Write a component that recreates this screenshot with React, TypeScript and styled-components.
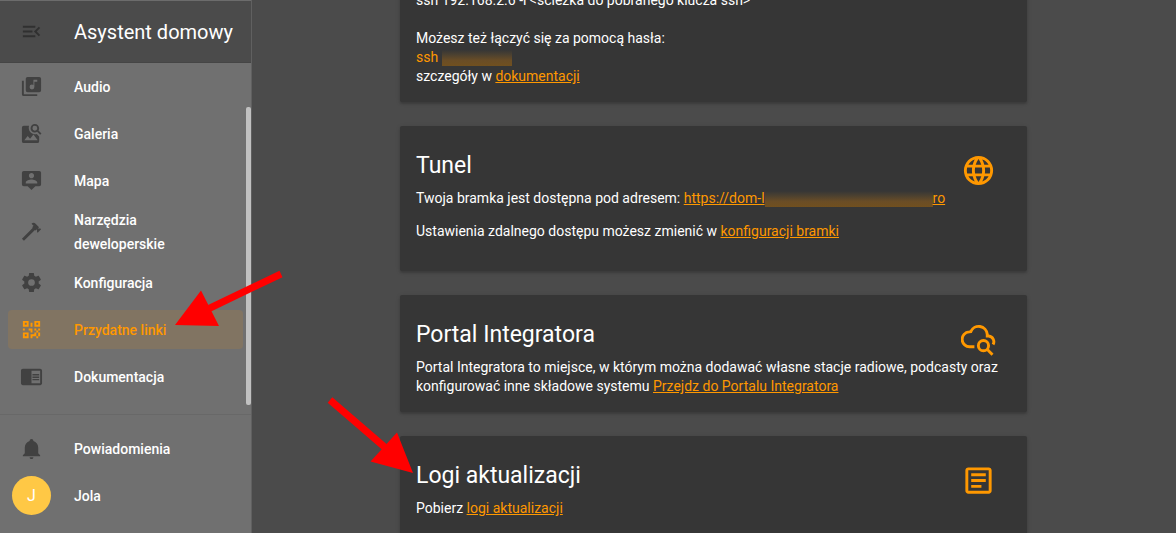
import React from "react";
import styled, { createGlobalStyle } from "styled-components";

const accent = "#ff9800";

const GlobalStyle = createGlobalStyle`
  * { box-sizing: border-box; }
  body {
    margin: 0;
    background: #4b4b4b;
    color: #fff;
    font-family: Roboto, "Noto Sans", sans-serif;
    font-size: 14px;
    line-height: 19px;
  }
`;

const Shell = styled.div`
  position: relative;
  display: flex;
  height: 100vh;
  overflow: hidden;
`;

const Sidebar = styled.aside`
  position: relative;
  display: flex;
  flex-direction: column;
  flex: none;
  width: 252px;
  background: #707070;
  border-right: 1px solid #606060;
`;

const SidebarHeader = styled.header`
  display: flex;
  align-items: center;
  gap: 31px;
  height: 63px;
  padding: 0 0 0 20px;
  background: #4b4b4b;
  border-top: 1px solid #6c6c6c;
  border-bottom: 1px solid #454545;
`;

const MenuButton = styled.button`
  display: flex;
  padding: 0;
  border: 0;
  background: none;
  color: #303030;
`;

const AppTitle = styled.div`
  font-size: 20px;
  line-height: 24px;
  white-space: nowrap;
`;

const Nav = styled.nav`
  display: flex;
  flex-direction: column;
  gap: 8px;
  padding: 4px 8px 0;
`;

const FooterNav = styled(Nav)`
  margin-top: auto;
  padding: 14px 8px 18px;
  border-top: 1px solid #686868;
`;

const NavItem = styled.a<{ $active?: boolean; $tall?: boolean }>`
  display: flex;
  align-items: center;
  gap: 31px;
  height: ${(p) => (p.$tall ? 47 : 39)}px;
  padding: 0 24px 0 12px;
  border-radius: 4px;
  background: ${(p) => (p.$active ? "rgba(255, 152, 0, 0.12)" : "transparent")};
  color: ${(p) => (p.$active ? accent : "#fff")};
  font-weight: 500;
  line-height: 24px;
  text-decoration: none;

  svg { color: ${(p) => (p.$active ? accent : "#414141")}; }
`;

const Avatar = styled.span`
  flex: none;
  width: 39px;
  margin: 0 -8px;
  border-radius: 50%;
  background: #ffc845;
  font-size: 16px;
  font-weight: 400;
  line-height: 39px;
  text-align: center;
`;

const Scrollbar = styled.div`
  position: absolute;
  top: 107px;
  right: 0;
  width: 5px;
  height: 298px;
  border-radius: 2px;
  background: #c1c1c1;
`;

const Main = styled.main`
  flex: 1;
  min-width: 0;
  padding: 0 25px 0 24px;
  overflow: hidden;
`;

const Cards = styled.div`
  display: flex;
  flex-direction: column;
  gap: 24px;
  max-width: 627px;
  margin: -25px auto 0;
`;

const Card = styled.section`
  padding: 16px;
  border-radius: 2px;
  background: #363636;
  box-shadow: 0 2px 2px rgba(0, 0, 0, 0.14), 0 1px 5px rgba(0, 0, 0, 0.12);
`;

const CardHeader = styled.div`
  display: flex;
  justify-content: space-between;
  align-items: flex-start;
  height: 47px;
  padding: 11px 15px 0 0;
`;

const CardTitle = styled.h1`
  margin: 0;
  font-size: 23px;
  font-weight: 400;
  line-height: 26px;
`;

const Text = styled.div``;

const Paragraph = styled.p`
  margin: 0 0 14px;
`;

const Link = styled.a`
  color: ${accent};
`;

const Command = styled.span`
  color: ${accent};
`;

const Redacted = styled.span<{ $width: number }>`
  display: inline-block;
  width: ${(p) => p.$width}px;
  height: 16px;
  vertical-align: -4px;
  background: linear-gradient(#363636, #4c4130 30%, #6a4d26 65%, #71501f);
`;

const Annotations = styled.svg`
  position: absolute;
  top: 0;
  left: 0;
  pointer-events: none;
`;

const icons = {
  menu: "M21,15.61L19.59,17L14.58,12L19.59,7L21,8.39L17.44,12L21,15.61M3,6H16V8H3V6M3,13V11H13V13H3M3,18V16H16V18H3Z",
  audio: "M20,2H8A2,2 0 0,0 6,4V16A2,2 0 0,0 8,18H20A2,2 0 0,0 22,16V4A2,2 0 0,0 20,2M18,7H15V12.5A2.5,2.5 0 0,1 12.5,15A2.5,2.5 0 0,1 10,12.5A2.5,2.5 0 0,1 12.5,10C13.07,10 13.58,10.19 14,10.5V5H18M4,6H2V20A2,2 0 0,0 4,22H18V20H4V6Z",
  gallery: "M15.5,2C13,2 11,4 11,6.5C11,9 13,11 15.5,11C16.4,11 17.2,10.7 17.9,10.3L21,13.4L22.4,12L19.3,8.9C19.7,8.2 20,7.4 20,6.5C20,4 18,2 15.5,2M15.5,4A2.5,2.5 0 0,1 18,6.5A2.5,2.5 0 0,1 15.5,9A2.5,2.5 0 0,1 13,6.5A2.5,2.5 0 0,1 15.5,4ZM9.4,4H4A2,2 0 0,0 2,6V20A2,2 0 0,0 4,22H18A2,2 0 0,0 20,20V15L17.5,12.6C12.5,14 8,9.5 9.4,4ZM4.5,19L8,14.5L10.5,17.5L14,13L18.5,19Z",
  map: "M20,2H4A2,2 0 0,0 2,4V16A2,2 0 0,0 4,18H8L12,22L16,18H20A2,2 0 0,0 22,16V4A2,2 0 0,0 20,2M12,4.3C13.5,4.3 14.7,5.5 14.7,7C14.7,8.5 13.5,9.7 12,9.7C10.5,9.7 9.3,8.5 9.3,7C9.3,5.5 10.5,4.3 12,4.3M18,15H6V14.1C6,12.1 10,11 12,11C14,11 18,12.1 18,14.1V15Z",
  hammer: "M2,19.63L13.43,8.2L12.72,7.5L14.14,6.07L12,3.89C13.2,2.7 15.09,2.7 16.27,3.89L19.87,7.5L18.45,8.91H21.29L22,9.62L18.45,13.21L17.74,12.5V9.62L16.27,11.04L15.56,10.33L4.13,21.76L2,19.63Z",
  cog: "M12,15.5A3.5,3.5 0 0,1 8.5,12A3.5,3.5 0 0,1 12,8.5A3.5,3.5 0 0,1 15.5,12A3.5,3.5 0 0,1 12,15.5M19.43,12.97C19.47,12.65 19.5,12.33 19.5,12C19.5,11.67 19.47,11.34 19.43,11L21.54,9.37C21.73,9.22 21.78,8.95 21.66,8.73L19.66,5.27C19.54,5.05 19.27,4.96 19.05,5.05L16.56,6.05C16.04,5.66 15.5,5.32 14.87,5.07L14.5,2.42C14.46,2.18 14.25,2 14,2H10C9.75,2 9.54,2.18 9.5,2.42L9.13,5.07C8.5,5.32 7.96,5.66 7.44,6.05L4.95,5.05C4.73,4.96 4.46,5.05 4.34,5.27L2.34,8.73C2.21,8.95 2.27,9.22 2.46,9.37L4.57,11C4.53,11.34 4.5,11.67 4.5,12C4.5,12.33 4.53,12.65 4.57,12.97L2.46,14.63C2.27,14.78 2.21,15.05 2.34,15.27L4.34,18.73C4.46,18.95 4.73,19.03 4.95,18.95L7.44,17.94C7.96,18.34 8.5,18.68 9.13,18.93L9.5,21.58C9.54,21.82 9.75,22 10,22H14C14.25,22 14.46,21.82 14.5,21.58L14.87,18.93C15.5,18.67 16.04,18.34 16.56,17.94L19.05,18.95C19.27,19.03 19.54,18.95 19.66,18.73L21.66,15.27C21.78,15.05 21.73,14.78 21.54,14.63L19.43,12.97Z",
  qr: "M3,11H5V13H3V11M11,5H13V9H11V5M9,11H13V15H11V13H9V11M15,11H17V13H19V11H21V13H19V15H21V19H19V21H17V19H13V21H11V17H15V15H17V13H15V11M19,19V15H17V19H19M15,3H21V9H15V3M17,5V7H19V5H17M3,3H9V9H3V3M5,5V7H7V5H5M3,15H9V21H3V15M5,17V19H7V17H5Z",
  docs: "M13 12h7v1.5h-7zM13 9.5h7V11h-7zM13 14.5h7V16h-7zM21 4H3c-1.1 0-2 .9-2 2v13c0 1.1.9 2 2 2h18c1.1 0 2-.9 2-2V6c0-1.1-.9-2-2-2zm0 15h-9V6h9v13z",
  bell: "M21,19V20H3V19L5,17V11C5,7.9 7.03,5.17 10,4.29C10,4.19 10,4.1 10,4A2,2 0 0,1 12,2A2,2 0 0,1 14,4C14,4.1 14,4.19 14,4.29C16.97,5.17 19,7.9 19,11V17L21,19M14,21A2,2 0 0,1 12,23A2,2 0 0,1 10,21",
  web: "M16.36,14C16.44,13.34 16.5,12.68 16.5,12C16.5,11.32 16.44,10.66 16.36,10H19.74C19.9,10.64 20,11.31 20,12C20,12.69 19.9,13.36 19.74,14M14.59,19.56C15.19,18.45 15.65,17.25 15.97,16H18.92C17.96,17.65 16.43,18.93 14.59,19.56M14.34,14H9.66C9.56,13.34 9.5,12.68 9.5,12C9.5,11.32 9.56,10.65 9.66,10H14.34C14.43,10.65 14.5,11.32 14.5,12C14.5,12.68 14.43,13.34 14.34,14M12,19.96C11.17,18.76 10.5,17.43 10.09,16H13.91C13.5,17.43 12.83,18.76 12,19.96M8,8H5.08C6.03,6.34 7.57,5.06 9.4,4.44C8.8,5.55 8.35,6.75 8,8M5.08,16H8C8.35,17.25 8.8,18.45 9.4,19.56C7.57,18.93 6.03,17.65 5.08,16M4.26,14C4.1,13.36 4,12.69 4,12C4,11.31 4.1,10.64 4.26,10H7.64C7.56,10.66 7.5,11.32 7.5,12C7.5,12.68 7.56,13.34 7.64,14M12,4.03C12.83,5.23 13.5,6.57 13.91,8H10.09C10.5,6.57 11.17,5.23 12,4.03M18.92,8H15.97C15.65,6.75 15.19,5.55 14.59,4.44C16.43,5.07 17.96,6.34 18.92,8M12,2C6.47,2 2,6.5 2,12A10,10 0 0,0 12,22A10,10 0 0,0 22,12A10,10 0 0,0 12,2Z",
  log: "M5,3C3.89,3 3,3.89 3,5V19C3,20.11 3.89,21 5,21H19C20.11,21 21,20.11 21,19V5C21,3.89 20.11,3 19,3H5M5,5H19V19H5V5M7,7V9H17V7H7M7,11V13H17V11H7M7,15V17H14V15H7Z",
};

const IconSvg = styled.svg`
  display: block;
  flex: none;
`;

function Icon({ name, size = 23, color = "currentColor" }: { name: keyof typeof icons; size?: number; color?: string }) {
  return (
    <IconSvg width={size} height={size} viewBox="0 0 24 24" fill={color} fillRule="evenodd" aria-hidden="true">
      <path d={icons[name]} />
    </IconSvg>
  );
}

function CloudSearchIcon() {
  return (
    <IconSvg width={35} height={35} viewBox="0 0 24 24" fill="none" stroke={accent} strokeWidth={2} aria-hidden="true">
      <path d="M9.2 17H6.2A5.1 5.1 0 0 1 5.6 6.8L6.7 6.6A5.9 5.9 0 0 1 18 8.4V9.6H19A3.9 3.9 0 0 1 22 15.4" />
      <circle cx="15.4" cy="16.2" r="3.5" />
      <path d="M17.9 18.7L21.6 22.4" />
    </IconSvg>
  );
}

const navItems: { icon: keyof typeof icons; label: string; active?: boolean; tall?: boolean }[] = [
  { icon: "audio", label: "Audio" },
  { icon: "gallery", label: "Galeria" },
  { icon: "map", label: "Mapa" },
  { icon: "hammer", label: "Narzędzia deweloperskie", tall: true },
  { icon: "cog", label: "Konfiguracja" },
  { icon: "qr", label: "Przydatne linki", active: true },
  { icon: "docs", label: "Dokumentacja" },
];

export default function App() {
  return (
    <Shell>
      <GlobalStyle />
      <Sidebar>
        <SidebarHeader>
          <MenuButton type="button" aria-label="Menu">
            <Icon name="menu" />
          </MenuButton>
          <AppTitle>Asystent domowy</AppTitle>
        </SidebarHeader>
        <Nav>
          {navItems.map((item) => (
            <NavItem key={item.label} href="#" $active={item.active} $tall={item.tall}>
              <Icon name={item.icon} />
              <span>{item.label}</span>
            </NavItem>
          ))}
        </Nav>
        <FooterNav>
          <NavItem href="#">
            <Icon name="bell" />
            <span>Powiadomienia</span>
          </NavItem>
          <NavItem href="#">
            <Avatar>J</Avatar>
            <span>Jola</span>
          </NavItem>
        </FooterNav>
        <Scrollbar />
      </Sidebar>

      <Main>
        <Cards>
          <Card>
            <Text>
              ssh 192.168.2.6 -i &lt;ścieżka do pobranego klucza ssh&gt;
              <br />
              <br />
              Możesz też łączyć się za pomocą hasła:
              <br />
              <Command>
                ssh <Redacted $width={70} />
              </Command>
              <br />
              szczegóły w <Link href="#">dokumentacji</Link>
            </Text>
          </Card>

          <Card>
            <CardHeader>
              <CardTitle>Tunel</CardTitle>
              <Icon name="web" size={35} color={accent} />
            </CardHeader>
            <Paragraph>
              Twoja bramka jest dostępna pod adresem:{" "}
              <Link href="#">
                https://dom-l
                <Redacted $width={168} />
                ro
              </Link>
            </Paragraph>
            <Paragraph>
              Ustawienia zdalnego dostępu możesz zmienić w <Link href="#">konfiguracji bramki</Link>
            </Paragraph>
          </Card>

          <Card>
            <CardHeader>
              <CardTitle>Portal Integratora</CardTitle>
              <CloudSearchIcon />
            </CardHeader>
            <Text>
              Portal Integratora to miejsce, w którym można dodawać własne stacje radiowe, podcasty oraz konfigurować inne
              składowe systemu <Link href="#">Przejdz do Portalu Integratora</Link>
            </Text>
          </Card>

          <Card>
            <CardHeader>
              <CardTitle>Logi aktualizacji</CardTitle>
              <Icon name="log" size={35} color={accent} />
            </CardHeader>
            <Text>
              Pobierz <Link href="#">logi aktualizacji</Link>
            </Text>
          </Card>
        </Cards>
      </Main>

      <Annotations width="420" height="480" viewBox="0 0 420 480" fill="#f00" stroke="#f00" aria-hidden="true">
        <path d="M281 274L208 309M330 400L388 450" strokeWidth="7" />
        <path d="M175 325L201 290.5L219 326ZM413 473L397 432.5L370.5 461.5Z" stroke="none" />
      </Annotations>
    </Shell>
  );
}
